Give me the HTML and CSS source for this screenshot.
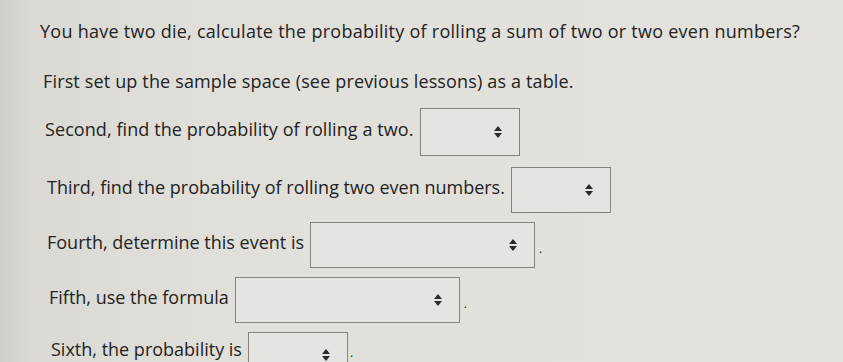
FILE: index.html
```html
<!DOCTYPE html>
<html lang="en">
<head>
    <meta charset="UTF-8">
    <title>Probability of two dice</title>
    <link rel="stylesheet" href="styles.css">
</head>
<body>
    <div class="sheet">
        <p class="line line-q">You have two die, calculate the probability of rolling a sum of two or two even numbers?</p>
        <p class="line line-2">First set up the sample space (see previous lessons) as a table.</p>

        <div class="row row-3">
            <span class="label">Second, find the probability of rolling a two.</span>
            <div class="picker picker-sm"><span class="arrows"></span></div>
        </div>

        <div class="row row-4">
            <span class="label">Third, find the probability of rolling two even numbers.</span>
            <div class="picker picker-sm"><span class="arrows"></span></div>
        </div>

        <div class="row row-5">
            <span class="label">Fourth, determine this event is</span>
            <div class="picker picker-lg"><span class="arrows"></span></div>
            <span class="dot">.</span>
        </div>

        <div class="row row-6">
            <span class="label">Fifth, use the formula</span>
            <div class="picker picker-lg"><span class="arrows"></span></div>
            <span class="dot">.</span>
        </div>

        <div class="row row-7">
            <span class="label">Sixth, the probability is</span>
            <div class="picker picker-sm"><span class="arrows"></span></div>
            <span class="dot">.</span>
        </div>
    </div>
</body>
</html>
```

FILE: styles.css
```css
:root {
    --box-color: #e5e4e0;
    --border-color: #84837f;
    --text-color: #232323;
}

html, body {
    height: 100%;
}

body {
    margin: 0;
    overflow: hidden;
    font-family: "Open Sans", "DejaVu Sans", sans-serif;
    font-size: 18px;
    color: var(--text-color);
    background: linear-gradient(to right, #d0cfca 0, #dad9d4 4%, #e0dfda 25%, #e3e2dd 100%);
}

.sheet {
    display: flex;
    flex-direction: column;
    padding-top: 19px;
}

.line {
    margin: 0;
    height: 24px;
    line-height: 24px;
    white-space: nowrap;
}

.line-q {
    padding-left: 40px;
    letter-spacing: 0.26px;
}

.line-2 {
    margin-top: 26px;
    padding-left: 43px;
    letter-spacing: 0.15px;
}

.row {
    display: flex;
    align-items: center;
    gap: 6px;
    margin-top: 9px;
    white-space: nowrap;
}

.label {
    padding-bottom: 6px;
}

.row-3 { margin-top: 15px; padding-left: 45px; }
.row-4 { margin-top: 11px; padding-left: 47px; }
.row-5 { padding-left: 47px; }
.row-6 { padding-left: 49px; }
.row-7 { padding-left: 51px; }

.row-3 .label { letter-spacing: 0.08px; }
.row-7 .label { padding-bottom: 13px; }

.picker {
    box-sizing: border-box;
    height: 46px;
    background-color: var(--box-color);
    border: 1.5px solid var(--border-color);
    display: flex;
    align-items: center;
    justify-content: flex-end;
    padding-right: 17px;
}

.row-3 .picker { height: 48px; }

.picker-sm { width: 100px; }
.picker-lg { width: 225px; }

.arrows {
    display: flex;
    flex-direction: column;
    gap: 2px;
}

.arrows::before,
.arrows::after {
    content: "";
    width: 0;
    height: 0;
    border-left: 4px solid transparent;
    border-right: 4px solid transparent;
}

.arrows::before {
    border-bottom: 5px solid #2a2a2a;
}

.arrows::after {
    border-top: 5px solid #2a2a2a;
}

.dot {
    font-size: 12px;
    line-height: 12px;
    padding-top: 8px;
    margin-left: -2px;
}

.row-7 .dot {
    align-self: flex-start;
    padding-top: 15px;
    margin-left: -4px;
}
```
